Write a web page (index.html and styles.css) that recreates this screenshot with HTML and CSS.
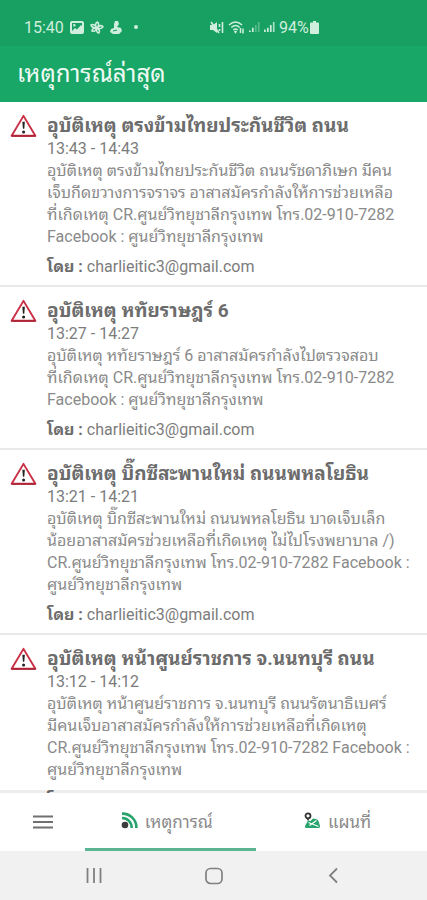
FILE: index.html
```html
<!DOCTYPE html>
<html lang="th">
<head>
<meta charset="utf-8">
<meta name="viewport" content="width=device-width, initial-scale=1">
<title>เหตุการณ์ล่าสุด</title>
<link rel="stylesheet" href="styles.css">
</head>
<body>
<svg class="defs" width="0" height="0" aria-hidden="true">
  <symbol id="warning" viewBox="0 0 28 24">
    <path d="M14 1.5 26.3 22.2H1.7Z" fill="#fff" stroke="#c92f45" stroke-width="2" stroke-linejoin="round"/>
    <path d="M2 22.4h24" stroke="#a82436" stroke-width="1.4" stroke-linecap="round"/>
    <path d="M12.8 7.5h2.6l-.6 7.4h-1.4z" fill="#222"/>
    <circle cx="14.1" cy="18.2" r="1.6" fill="#222"/>
  </symbol>
</svg>
<div class="app">
  <div class="status">
    <div class="status-left">
      <span>15:40</span>
      <svg width="14" height="13" viewBox="0 0 14 13"><path fill-rule="evenodd" fill="currentColor" d="M2 0h10q2 0 2 2v9q0 2-2 2H2q-2 0-2-2V2q0-2 2-2Zm0 2v8l3-3 2 1.5L11 4l1 1V2ZM4.300 3a1.300 1.300 0 1 1 0 2.600 1.300 1.300 0 0 1 0-2.600Z"/></svg>
      <svg width="14" height="13" viewBox="0 0 14 13" fill="none" stroke="currentColor" stroke-width="1.500"><path d="M7 7C5 5 5 2 7.500 1c2 1.500 1 4-.5 6 2-2.500 4-3 6-1.500-.5 2-3 2.500-6 1.500 2 1 3 3 2 5-2 0-3-2-2-5-1 2.500-3 4-5 3 0-2 2-3 5-3-3 0-5.500-.5-6-3 2-1 4.500 0 6 3Z"/></svg>
      <svg width="12" height="13" viewBox="0 0 12 13" fill="currentColor"><path d="M5 0h3l1 3-2 3 4 1 1 3-3 3H3L0 11l1-3 3-1V3Z"/><path d="m3 10 4-1" stroke="#17a062" stroke-width="1.200"/></svg>
      <span class="dot"></span>
    </div>
    <div class="status-right">
      <svg width="14" height="13" viewBox="0 0 14 13" fill="none" stroke="currentColor" stroke-width="1.600"><path d="M0 4h3l4-3v11L3 9H0Z" fill="currentColor" stroke="none"/><path d="m1 1 8 11M9.500 3v3M9.500 8v2M12.500 1v11"/></svg>
      <svg width="17" height="13" viewBox="0 0 17 13" fill="none" stroke="currentColor" stroke-width="1.500"><path d="M1 4q6.500-6 13 0M3.300 6.500q4.200-4 8.400 0M5.300 9q2.200-2 4.400 0"/><path d="m6.500 10 1 1.500 1-1.500M12.500 7v5M15 7.500v5" /></svg>
      <svg width="11" height="12" viewBox="0 0 13 12" fill="currentColor"><path d="M0 10h2v2H0zM3.500 7h2v5h-2z"/><path opacity=".35" d="M7 3.500h2V12H7zM10.500 0h2v12h-2z"/></svg>
      <svg width="11" height="12" viewBox="0 0 13 12" fill="currentColor"><path d="M0 9h2v3H0zM3.500 7h2v5h-2zM7 3.500h2V12H7z"/><path opacity=".8" d="M10.500 0h2v12h-2z"/></svg>
      <span>94%</span>
      <svg class="battery" width="9" height="13" viewBox="0 0 9 13" fill="currentColor"><path d="M3 0h3v1.500h2q1 0 1 1V12q0 1-1 1H1q-1 0-1-1V2.500q0-1 1-1h2Z"/></svg>
    </div>
  </div>
  <header class="header"><h1>เหตุการณ์ล่าสุด</h1></header>
  <main class="list">
    <article class="card">
      <svg class="icon" role="img" aria-label="อุบัติเหตุ"><use href="#warning"/></svg>
      <div class="content">
        <h2>อุบัติเหตุ ตรงข้ามไทยประกันชีวิต ถนน</h2>
        <p class="time">13:43 - 14:43</p>
        <p>อุบัติเหตุ ตรงข้ามไทยประกันชีวิต ถนนรัชดาภิเษก มีคน<br>เจ็บกีดขวางการจราจร อาสาสมัครกำลังให้การช่วยเหลือ<br>ที่เกิดเหตุ CR.ศูนย์วิทยุชาลีกรุงเทพ โทร.02-910-7282<br>Facebook : ศูนย์วิทยุชาลีกรุงเทพ</p>
        <p class="by"><b>โดย :</b> charlieitic3@gmail.com</p>
      </div>
    </article>
    <article class="card">
      <svg class="icon" role="img" aria-label="อุบัติเหตุ"><use href="#warning"/></svg>
      <div class="content">
        <h2>อุบัติเหตุ หทัยราษฎร์ 6</h2>
        <p class="time">13:27 - 14:27</p>
        <p>อุบัติเหตุ หทัยราษฎร์ 6 อาสาสมัครกำลังไปตรวจสอบ<br>ที่เกิดเหตุ CR.ศูนย์วิทยุชาลีกรุงเทพ โทร.02-910-7282<br>Facebook : ศูนย์วิทยุชาลีกรุงเทพ</p>
        <p class="by"><b>โดย :</b> charlieitic3@gmail.com</p>
      </div>
    </article>
    <article class="card">
      <svg class="icon" role="img" aria-label="อุบัติเหตุ"><use href="#warning"/></svg>
      <div class="content">
        <h2>อุบัติเหตุ บิ๊กซีสะพานใหม่ ถนนพหลโยธิน</h2>
        <p class="time">13:21 - 14:21</p>
        <p>อุบัติเหตุ บิ๊กซีสะพานใหม่ ถนนพหลโยธิน บาดเจ็บเล็ก<br>น้อยอาสาสมัครช่วยเหลือที่เกิดเหตุ ไม่ไปโรงพยาบาล /)<br>CR.ศูนย์วิทยุชาลีกรุงเทพ โทร.02-910-7282 Facebook :<br>ศูนย์วิทยุชาลีกรุงเทพ</p>
        <p class="by"><b>โดย :</b> charlieitic3@gmail.com</p>
      </div>
    </article>
    <article class="card">
      <svg class="icon" role="img" aria-label="อุบัติเหตุ"><use href="#warning"/></svg>
      <div class="content">
        <h2>อุบัติเหตุ หน้าศูนย์ราชการ จ.นนทบุรี ถนน</h2>
        <p class="time">13:12 - 14:12</p>
        <p>อุบัติเหตุ หน้าศูนย์ราชการ จ.นนทบุรี ถนนรัตนาธิเบศร์<br>มีคนเจ็บอาสาสมัครกำลังให้การช่วยเหลือที่เกิดเหตุ<br>CR.ศูนย์วิทยุชาลีกรุงเทพ โทร.02-910-7282 Facebook :<br>ศูนย์วิทยุชาลีกรุงเทพ</p>
        <p class="by"><b>โดย :</b> charlieitic3@gmail.com</p>
      </div>
    </article>
  </main>
  <nav class="tabs">
    <button class="menu" type="button" aria-label="เมนู">
      <svg width="20" height="14" viewBox="0 0 20 14"><path d="M0 1.500h20M0 7h20M0 12.500h20" stroke="#707070" stroke-width="2.200"/></svg>
    </button>
    <a class="tab active" href="#events">
      <svg width="17" height="17" viewBox="0 0 17 17"><g fill="none" stroke="#27a36c" stroke-width="2.600"><path d="M1 1.600A14 14 0 0 1 15.400 16M1 6a9.500 9.500 0 0 1 9.600 10"/></g><circle cx="4" cy="13" r="3.300" fill="#3c3c3c"/></svg>
      <span>เหตุการณ์</span>
    </a>
    <a class="tab" href="#map">
      <svg width="17" height="17" viewBox="0 0 17 17"><path d="M4 8.500 1 14q-.5 2 1.500 2h12q2 0 1.500-2l-1.500-5q-1-2-3-2L9 6.500 6.500 9Z" fill="#27a36c"/><path d="m4.500 10.500 10 4M5.500 13.500 12.500 8.500" stroke="#fff" stroke-width="1.200"/><circle cx="4" cy="3.800" r="2.500" fill="#fff" stroke="#333" stroke-width="1.800"/><path d="M2.300 6h3.400L4 9Z" fill="#333"/></svg>
      <span>แผนที่</span>
    </a>
  </nav>
  <div class="system">
    <button type="button" aria-label="แอปล่าสุด"><svg width="16" height="17" viewBox="0 0 16 17"><path d="M1.500 1v15M8 1v15M14.500 1v15" stroke="#808080" stroke-width="1.800"/></svg></button>
    <button type="button" aria-label="หน้าหลัก"><svg width="18" height="18" viewBox="0 0 18 18"><rect x="1" y="1.500" width="16" height="15" rx="4.500" fill="none" stroke="#808080" stroke-width="1.700"/></svg></button>
    <button type="button" aria-label="ย้อนกลับ"><svg width="10" height="17" viewBox="0 0 10 17"><path d="M9 1.500 2 8.500l7 7" fill="none" stroke="#808080" stroke-width="1.800"/></svg></button>
  </div>
</div>
</body>
</html>
```
FILE: styles.css
```css
* { box-sizing: border-box; }
body {
  margin: 0;
  font-family: Roboto, "Noto Sans Thai Looped", "Noto Looped Thai", "Noto Sans Thai", sans-serif;
  font-size: 16px;
  color: #8a8a8a;
  background: #fff;
}
.defs { display: block; width: 0; height: 0; }
h1, h2, p { margin: 0; }
button { padding: 0; border: 0; background: none; }
a { color: inherit; text-decoration: none; }
svg { flex: none; }

.app { display: flex; flex-direction: column; height: 100vh; }

.status {
  display: flex;
  height: 46px;
  padding: 8px 24px 0;
  background: #17a062;
  color: #d0eedd;
}
.status-left, .status-right { display: flex; align-items: center; gap: 6px; }
.status-left { width: 186px; }
.status-right { gap: 4px; }
.status-right .battery { margin-left: -3px; }
.dot { width: 4px; height: 4px; margin-left: 6px; border-radius: 50%; background: currentColor; }

.header {
  display: flex;
  align-items: center;
  height: 56px;
  padding: 0 17px;
  background: #19a768;
  color: #effaf4;
}
.header h1 { font-size: 24px; font-weight: 400; line-height: 32px; }

.list { flex: 1; min-height: 0; overflow: hidden; }
.card {
  display: flex;
  gap: 10px;
  padding: 12px 8px 7px 10px;
  border-bottom: 2px solid #e9e9e9;
}
.icon { width: 27px; height: 24px; }
.content { flex: 1; min-width: 0; line-height: 22px; white-space: nowrap; }
.content h2 { font-size: 19px; font-weight: 700; line-height: 24px; color: #6c6c6c; }
.time, .by { color: #7c7c7c; }
.by { margin-top: 8px; }
.by b { color: #6c6c6c; }

.tabs {
  position: relative;
  display: flex;
  height: 61px;
  margin-top: -3px;
  border-top: 3px solid rgba(0, 0, 0, .07);
  background: #fff;
  background-clip: padding-box;
}
.menu { width: 20%; display: flex; align-items: center; justify-content: center; }
.tab {
  width: 40%;
  display: flex;
  align-items: center;
  justify-content: center;
  gap: 7px;
  padding-right: 8px;
  border-bottom: 3px solid transparent;
  font-size: 17px;
}
.tab.active { border-bottom-color: #5bb592; }

.system { display: flex; height: 49px; padding: 0 34px; background: #f1f1f1; }
.system button { flex: 1; display: flex; align-items: center; justify-content: center; }
```
